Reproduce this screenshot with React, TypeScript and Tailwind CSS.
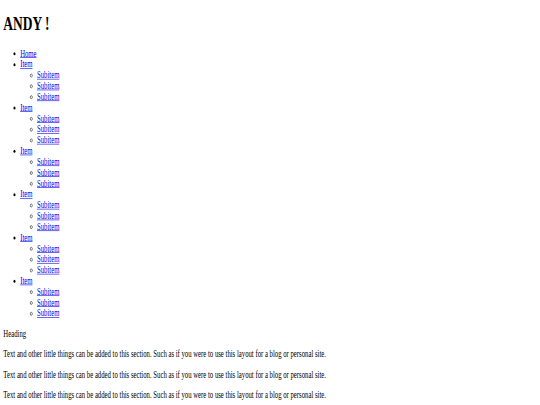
const items = [1, 2, 3, 4, 5, 6];
const subs = [1, 2, 3];

function Sublist() {
  return (
    <ul className="list-[circle] pl-10">
      {subs.map((s) => (
        <li key={s}>
          <a href="#" className="text-[#0000ee] underline">Subitem</a>
        </li>
      ))}
    </ul>
  );
}

export default function App() {
  return (
    <div className="h-[405px] w-[540px] overflow-hidden bg-white">
      <div className="w-[1286px] origin-top-left scale-x-[0.42] scale-y-[0.6017] px-2 pt-[21.44px] font-['Liberation_Serif',serif] text-[16px] leading-[normal] text-black">
        <h1 className="mb-[21.44px] text-[32px] font-bold leading-[normal]">ANDY !</h1>
        <ul className="mb-4 list-disc pl-10">
          <li>
            <a href="#" className="text-[#0000ee] underline">Home</a>
          </li>
          {items.map((i) => (
            <li key={i}>
              <a href="#" className="text-[#0000ee] underline">Item</a>
              <Sublist />
            </li>
          ))}
        </ul>
        <p className="my-4">Heading</p>
        {[1, 2, 3].map((n) => (
          <p key={n} className="my-4">
            Text and other little things can be added to this section. Such as if you were to use this layout for a blog or personal site.
          </p>
        ))}
      </div>
    </div>
  );
}
